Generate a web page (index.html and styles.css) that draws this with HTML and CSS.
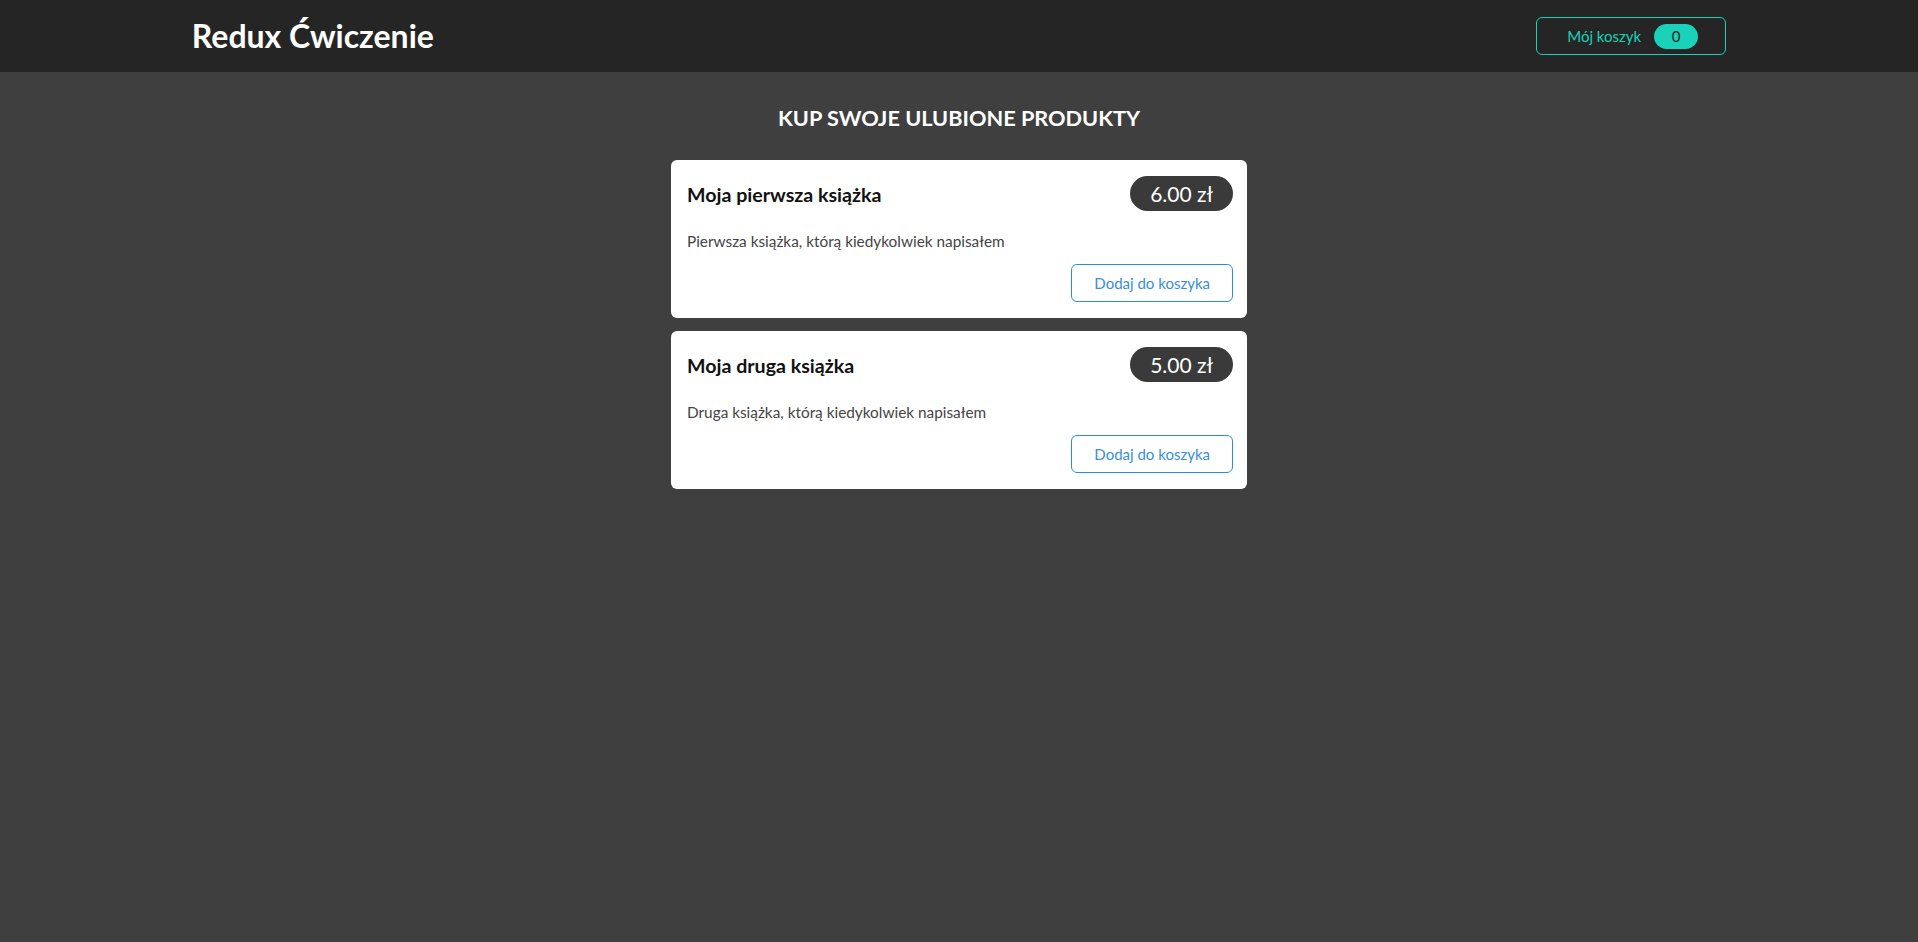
FILE: index.html
```html
<!DOCTYPE html>
<html lang="pl">
<head>
<meta charset="utf-8">
<title>Redux Ćwiczenie</title>
<link rel="stylesheet" href="styles.css">
</head>
<body>
<header class="header">
  <h1 class="logo">Redux Ćwiczenie</h1>
  <button class="cart-button" type="button">
    <span class="cart-label">Mój koszyk</span>
    <span class="cart-badge">0</span>
  </button>
</header>
<main class="products">
  <h2 class="products-title">Kup swoje ulubione produkty</h2>
  <ul class="product-list">
    <li class="card">
      <div class="card-head">
        <h3 class="card-title">Moja pierwsza książka</h3>
        <div class="price">6.00 zł</div>
      </div>
      <p class="card-desc">Pierwsza książka, którą kiedykolwiek napisałem</p>
      <div class="actions">
        <button class="add-button" type="button">Dodaj do koszyka</button>
      </div>
    </li>
    <li class="card">
      <div class="card-head">
        <h3 class="card-title">Moja druga książka</h3>
        <div class="price">5.00 zł</div>
      </div>
      <p class="card-desc">Druga książka, którą kiedykolwiek napisałem</p>
      <div class="actions">
        <button class="add-button" type="button">Dodaj do koszyka</button>
      </div>
    </li>
  </ul>
</main>
</body>
</html>
```
FILE: styles.css
```css
* { box-sizing: border-box; }

html, body {
  margin: 0;
  padding: 0;
}

body {
  background-color: #3f3f3f;
  font-family: Lato, "Noto Sans", sans-serif;
  min-height: 100vh;
}

.header {
  height: 72px;
  padding: 0 10%;
  display: flex;
  justify-content: space-between;
  align-items: center;
  background-color: #252525;
}

.logo {
  margin: 0;
  color: #ffffff;
  font-size: 32px;
  font-weight: 700;
  line-height: 1.2;
}

.cart-button {
  display: flex;
  align-items: center;
  height: 38px;
  width: 190px;
  padding: 0 0 0 30px;
  background: transparent;
  border: 1px solid #1ad1b9;
  border-radius: 6px;
  color: #1ad1b9;
  font-family: inherit;
  font-size: 15px;
  cursor: pointer;
}

.cart-badge {
  margin-left: 13px;
  height: 25px;
  width: 44px;
  display: flex;
  align-items: center;
  justify-content: center;
  background-color: #1ad1b9;
  border-radius: 30px;
  color: #1d1d1d;
  font-size: 15px;
}

.products-title {
  margin: 33px 0 29px;
  text-align: center;
  text-transform: uppercase;
  color: #ffffff;
  font-size: 21.7px;
  font-weight: 700;
  line-height: 1.2;
}

.product-list {
  list-style: none;
  margin: 0;
  padding: 0;
  display: flex;
  flex-direction: column;
  align-items: center;
  gap: 13px;
}

.card {
  width: 576px;
  padding: 16px 14px 16px 16px;
  background: #ffffff;
  border-radius: 6px;
}

.card-head {
  display: flex;
  justify-content: space-between;
  align-items: center;
}

.card-title {
  margin: 0;
  padding-top: 2px;
  font-size: 19.6px;
  font-weight: 700;
  color: #111111;
}

.price {
  height: 35px;
  padding: 0 20px;
  display: flex;
  align-items: center;
  border-radius: 30px;
  background-color: #3a3a3a;
  color: #ffffff;
  font-size: 21px;
}

.card-desc {
  margin: 20px 0 13px;
  line-height: 20px;
  font-size: 15.35px;
  color: #444444;
}

.actions {
  display: flex;
  justify-content: flex-end;
}

.add-button {
  height: 38px;
  padding: 0 22px;
  background: transparent;
  border: 1px solid #2b8bdc;
  border-radius: 6px;
  color: #3a8ddb;
  font-family: inherit;
  font-size: 15px;
  cursor: pointer;
}
```
